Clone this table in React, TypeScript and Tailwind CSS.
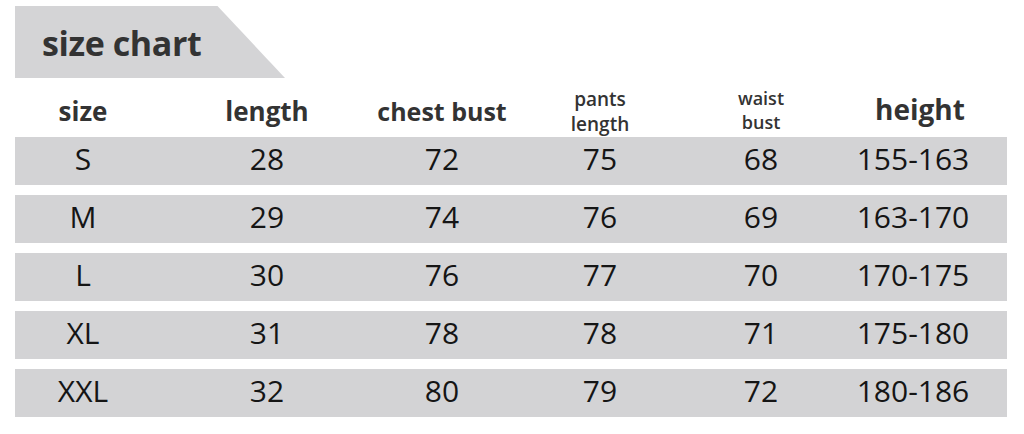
import React from 'react';

const rows = [
  ['S', '28', '72', '75', '68', '155-163'],
  ['M', '29', '74', '76', '69', '163-170'],
  ['L', '30', '76', '77', '70', '170-175'],
  ['XL', '31', '78', '78', '71', '175-180'],
  ['XXL', '32', '80', '79', '72', '180-186'],
];

// column widths so that the text centres line up with the picture
const cols = ['w-[136px]', 'w-[232px]', 'w-[118px]', 'w-[198px]', 'w-[124px]', 'w-[180px]'];

const Cell: React.FC<{ i: number; children: React.ReactNode }> = ({ i, children }) => (
  <div className={`${cols[i]} shrink-0 flex justify-center whitespace-nowrap`}>{children}</div>
);

export default function App() {
  return (
    <div className="w-[1024px] h-[434px] bg-white pl-[15px] pr-[17px] pt-[6px] font-['Open_Sans',sans-serif] overflow-hidden">
      {/* title tab */}
      <div className="w-[270px] h-[72px] bg-[#d4d4d6] [clip-path:polygon(0_0,75%_0,100%_100%,0_100%)] flex items-center pl-[27px] pt-[2px]">
        <span className="text-[34px] font-bold text-[#333] leading-none tracking-[-0.4px]">size chart</span>
      </div>

      {/* header */}
      <div className="h-[59px] flex items-center pt-[8px] font-bold text-[#333]">
        <Cell i={0}><span className="text-[26px]">size</span></Cell>
        <Cell i={1}><span className="text-[26px]">length</span></Cell>
        <Cell i={2}><span className="text-[25px]">chest bust</span></Cell>
        <Cell i={3}>
          <span className="text-[19px] leading-[25px] text-center font-semibold">pants<br />length</span>
        </Cell>
        <Cell i={4}>
          <span className="text-[18px] leading-[24px] text-center font-semibold -translate-y-[2px]">waist<br />bust</span>
        </Cell>
        <Cell i={5}><span className="text-[28px] -translate-y-[3px] translate-x-[7px]">height</span></Cell>
      </div>

      {/* rows */}
      <div className="flex flex-col gap-[10px]">
        {rows.map((r) => (
          <div key={r[0]} className="h-[48px] bg-[#d3d3d5] flex items-center pb-[6px] text-[30px] text-[#151515]">
            {r.map((v, i) => (
              <Cell key={i} i={i}>{v}</Cell>
            ))}
          </div>
        ))}
      </div>
    </div>
  );
}
